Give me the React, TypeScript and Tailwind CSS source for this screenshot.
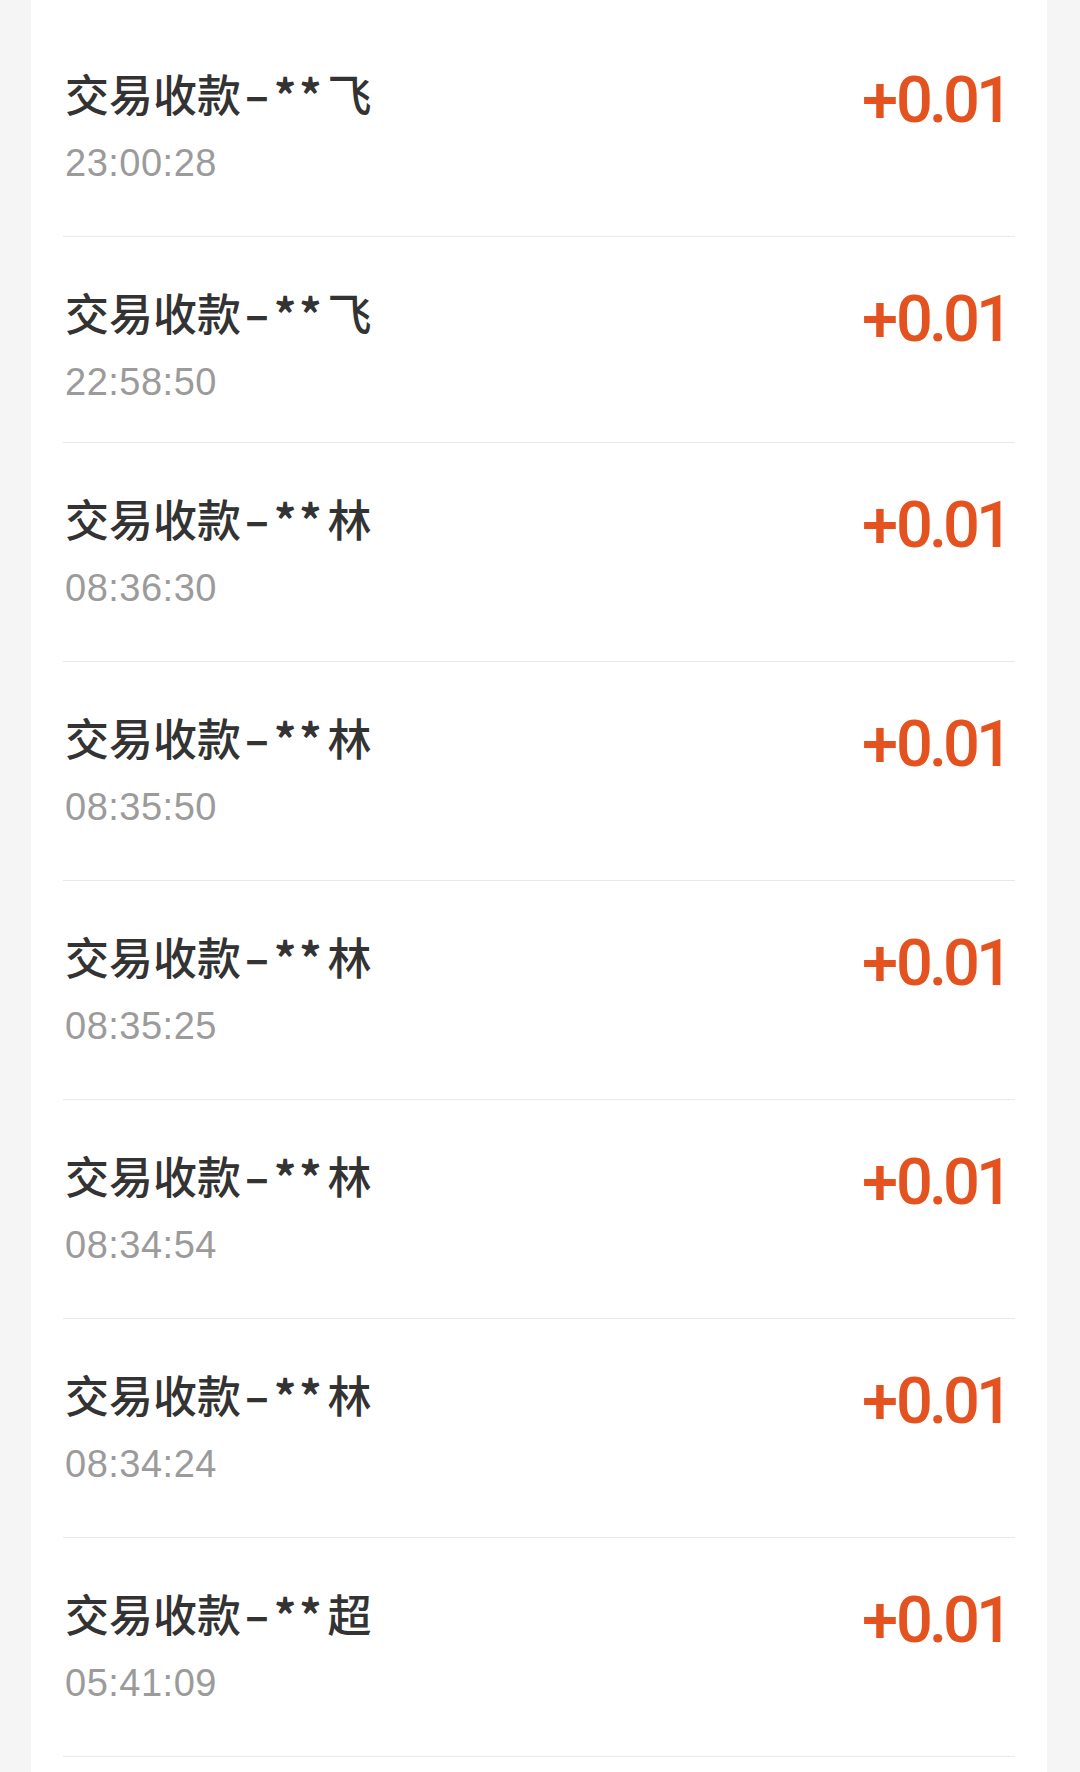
const records = [
  { name: "飞", time: "23:00:28", amount: "0.01" },
  { name: "飞", time: "22:58:50", amount: "0.01" },
  { name: "林", time: "08:36:30", amount: "0.01" },
  { name: "林", time: "08:35:50", amount: "0.01" },
  { name: "林", time: "08:35:25", amount: "0.01" },
  { name: "林", time: "08:34:54", amount: "0.01" },
  { name: "林", time: "08:34:24", amount: "0.01" },
  { name: "超", time: "05:41:09", amount: "0.01" },
];

const rowPadding = (index: number) => {
  if (index === 0) return "pt-[71px] pb-[54px]";
  if (index === 1) return "pt-[53px] pb-[41px]";
  return "pt-[53px] pb-[54px]";
};

const App = () => {
  return (
    <div className="min-h-[1772px] bg-[#f5f5f5] pl-[31px] pr-[33px]">
      <div className="min-h-[1772px] bg-white px-8">
        {records.map((item, index) => (
          <div
            key={index}
            className={`flex items-start justify-between border-b border-[#e9e9e9] ${rowPadding(index)}`}
          >
            <div className="flex flex-col pl-[2px]">
              <span className="text-[44px] leading-[44px] font-medium text-[#333333] [font-family:'Noto_Sans_CJK_SC','Noto_Sans',sans-serif]">
                交易收款
                <span className="ml-[4px] mr-[5px] font-bold">–</span>
                <span className="mr-[3px] font-bold tracking-[3px]">**</span>
                {item.name}
              </span>
              <span className="mt-[29px] text-[38px] leading-[38px] tracking-[0.5px] text-[#9b9b9b] [font-family:'Liberation_Sans',Arial,sans-serif]">
                {item.time}
              </span>
            </div>
            <span className="mr-[6px] -mt-[3px] text-[65px] leading-[65px] font-medium tracking-[-4px] text-[#e4531f] [font-family:Roboto,'Liberation_Sans',sans-serif]">
              <span className="mr-[2px]">+</span>
              {item.amount}
            </span>
          </div>
        ))}
      </div>
    </div>
  );
};

export default App;
